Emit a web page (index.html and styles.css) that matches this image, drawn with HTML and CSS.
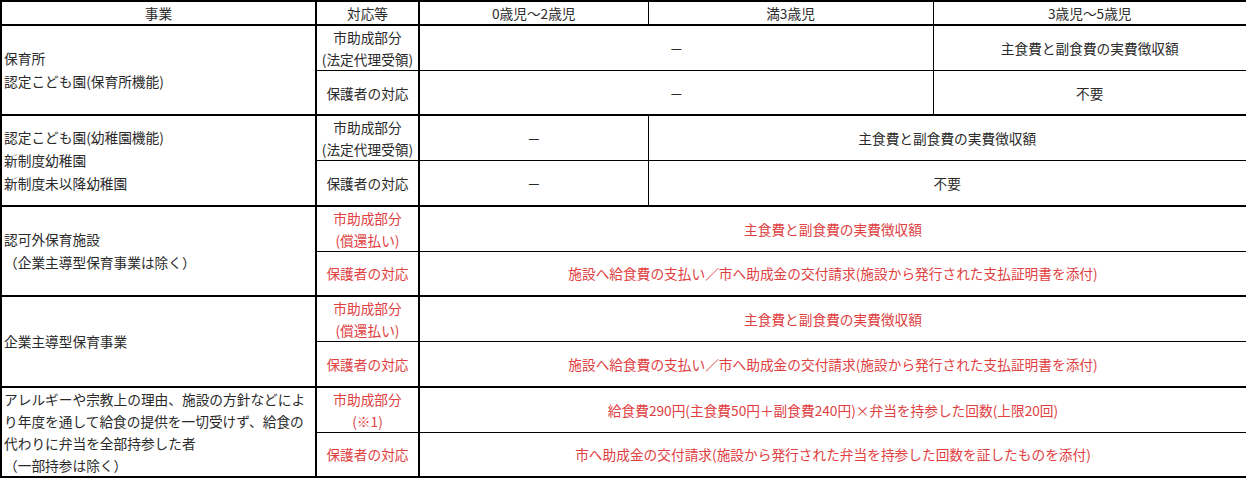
FILE: index.html
```html
<!DOCTYPE html>
<html lang="ja">
<head>
<meta charset="utf-8">
<link rel="stylesheet" href="styles.css">
</head>
<body>
<table class="t">
  <colgroup>
    <col class="c1"><col class="c2"><col class="c3"><col class="c4"><col class="c5">
  </colgroup>
  <thead>
    <tr class="hd">
      <th class="h1">事業</th>
      <th class="k2">対応等</th>
      <th>0歳児～2歳児</th>
      <th>満3歳児</th>
      <th>3歳児～5歳児</th>
    </tr>
  </thead>
  <tbody>
    <tr class="ga">
      <td class="k1" rowspan="2">保育所<br>認定こども園(保育所機能)</td>
      <td class="k2">市助成部分<br>(法定代理受領)</td>
      <td colspan="2">－</td>
      <td>主食費と副食費の実費徴収額</td>
    </tr>
    <tr class="gb">
      <td class="k2">保護者の対応</td>
      <td colspan="2">－</td>
      <td>不要</td>
    </tr>

    <tr class="ga">
      <td class="k1" rowspan="2">認定こども園(幼稚園機能)<br>新制度幼稚園<br>新制度未以降幼稚園</td>
      <td class="k2">市助成部分<br>(法定代理受領)</td>
      <td>－</td>
      <td colspan="2">主食費と副食費の実費徴収額</td>
    </tr>
    <tr class="gb">
      <td class="k2">保護者の対応</td>
      <td>－</td>
      <td colspan="2">不要</td>
    </tr>

    <tr class="ga red">
      <td class="k1" rowspan="2">認可外保育施設<br>（企業主導型保育事業は除く）</td>
      <td class="k2">市助成部分<br>(償還払い)</td>
      <td colspan="3">主食費と副食費の実費徴収額</td>
    </tr>
    <tr class="gb red">
      <td class="k2">保護者の対応</td>
      <td colspan="3">施設へ給食費の支払い／市へ助成金の交付請求(施設から発行された支払証明書を添付)</td>
    </tr>

    <tr class="ga red">
      <td class="k1" rowspan="2">企業主導型保育事業</td>
      <td class="k2">市助成部分<br>(償還払い)</td>
      <td colspan="3">主食費と副食費の実費徴収額</td>
    </tr>
    <tr class="gb red">
      <td class="k2">保護者の対応</td>
      <td colspan="3">施設へ給食費の支払い／市へ助成金の交付請求(施設から発行された支払証明書を添付)</td>
    </tr>

    <tr class="ga red">
      <td class="k1 tight" rowspan="2">アレルギーや宗教上の理由、施設の方針などによ<br>り年度を通して給食の提供を一切受けず、給食の<br>代わりに弁当を全部持参した者<br>（一部持参は除く）</td>
      <td class="k2">市助成部分<br>(※1)</td>
      <td colspan="3">給食費290円(主食費50円＋副食費240円)×弁当を持参した回数(上限20回)</td>
    </tr>
    <tr class="gb red">
      <td class="k2">保護者の対応</td>
      <td colspan="3">市へ助成金の交付請求(施設から発行された弁当を持参した回数を証したものを添付)</td>
    </tr>
  </tbody>
</table>
</body>
</html>
```

FILE: styles.css
```css
html, body {
  margin: 0;
  padding: 0;
  background: #fff;
}

.t {
  width: 1246px;
  table-layout: fixed;
  border-collapse: collapse;
  border: 2px solid #000;
  font-family: "Noto Sans CJK JP", "Noto Sans", sans-serif;
  font-size: 13.7px;
  color: #2a2a2a;
}

.c1 { width: 315px; }
.c2 { width: 103px; }
.c3 { width: 229px; }
.c4 { width: 285px; }
.c5 { width: 314px; }

.t th,
.t td {
  border: 1px solid #000;
  padding: 0;
  text-align: center;
  vertical-align: middle;
  line-height: 22px;
  font-weight: normal;
  white-space: nowrap;
}

.hd th {
  height: 20px;
  border-bottom: 2px solid #000;
}

.t .h1 {
  border-right: 2px solid #000;
}

.t .k1 {
  text-align: left;
  padding-left: 2px;
  line-height: 23px;
  border-right: 2px solid #000;
}

.t .k1.tight {
  line-height: 22px;
}

.t .k2 {
  border-right: 2px solid #000;
}

.ga td {
  height: 43.4px;
  border-top: 2px solid #000;
}

.gb td {
  height: 43.4px;
}

.red td {
  color: #e0403f;
}

.red td.k1 {
  color: #2a2a2a;
}
```
